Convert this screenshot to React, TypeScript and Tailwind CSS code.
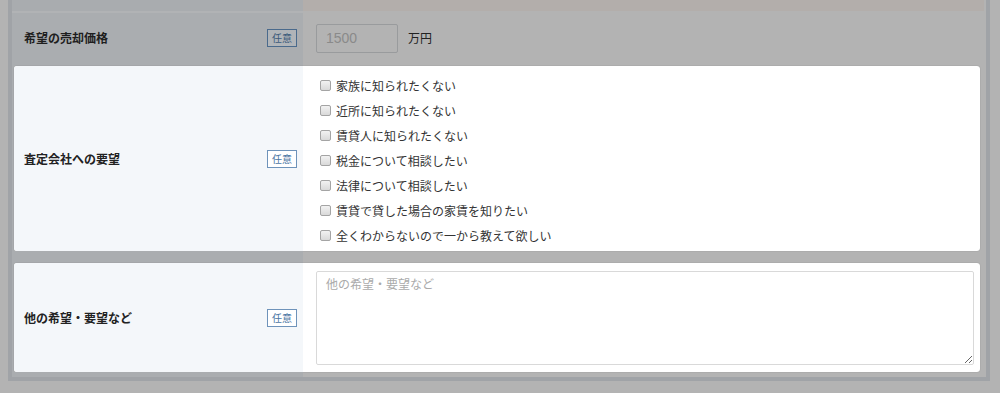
import React from "react";

const options = [
  "家族に知られたくない",
  "近所に知られたくない",
  "賃貸人に知られたくない",
  "税金について相談したい",
  "法律について相談したい",
  "賃貸で貸した場合の家賃を知りたい",
  "全くわからないので一から教えて欲しい",
];

function Badge({ dim }: { dim?: boolean }) {
  return dim ? (
    <span className="inline-flex items-center justify-center w-[30px] h-[18px] border border-[#4a6a8c] bg-[#b0b4b8] text-[#3b5a7a] text-[10px] leading-none">
      任意
    </span>
  ) : (
    <span className="inline-flex items-center justify-center w-[30px] h-[18px] border border-[#6e93ba] bg-white text-[#4b76a3] text-[10px] leading-none">
      任意
    </span>
  );
}

export default function App() {
  return (
    <div className="w-[1000px] h-[393px] bg-[#b3b3b3] overflow-hidden font-['Noto_Sans_CJK_JP',sans-serif]">
      <div className="ml-[8px] w-[982px] border-l-4 border-r-4 border-b-4 border-[#a0a3a7] bg-[#b3b3b3]">
        {/* partially visible top row */}
        <div className="flex h-[11px]">
          <div className="w-[291px] bg-[#a9acaf]" />
          <div className="flex-1 mr-[2px] bg-[#b3aeab]" />
        </div>
        <div className="flex h-[2px]">
          <div className="w-[291px] bg-[#b1b3b5]" />
          <div className="flex-1" />
        </div>
        {/* dimmed row: 希望の売却価格 */}
        <div className="flex h-[50px]">
          <div className="w-[291px] bg-[#aaadb0] flex items-center justify-between pl-[12px] pr-[6px]">
            <span className="text-[12px] font-bold text-[#1e1e1e] leading-none">希望の売却価格</span>
            <Badge dim />
          </div>
          <div className="flex-1 flex items-center pl-[13px]">
            <div className="w-[82px] h-[29px] border border-[#999b9d] rounded-[2px] flex items-center pl-[9px] text-[14px] text-[#8a8a8a] font-['Liberation_Sans',sans-serif]">
              1500
            </div>
            <span className="ml-[10px] text-[12px] text-[#222] leading-none">万円</span>
          </div>
        </div>
        <div className="flex h-[3px]">
          <div className="w-[291px] bg-[#aaadb0]" />
          <div className="flex-1" />
        </div>
        {/* highlighted row: 査定会社への要望 */}
        <div className="flex">
          <div className="w-[2px] bg-[#aaadb0]" />
          <div className="w-[966px] h-[185px] flex bg-white rounded-[3px] overflow-hidden shadow-[0_0_1px_rgba(0,0,0,0.35)]">
            <div className="w-[289px] bg-[#f4f7fa] flex items-center justify-between pl-[10px] pr-[6px]">
              <span className="text-[12px] font-bold text-[#222] leading-none">査定会社への要望</span>
              <Badge />
            </div>
            <div className="flex-1 flex flex-col pt-[7px] pl-[17px]">
              {options.map((o) => (
                <label key={o} className="h-[25px] flex items-center gap-[5px]">
                  <span className="w-[11px] h-[11px] border border-[#a4a4a4] rounded-[2px] bg-gradient-to-b from-[#f2f2f2] to-[#d9d9d9]" />
                  <span className="text-[12px] text-[#333] leading-none">{o}</span>
                </label>
              ))}
            </div>
          </div>
        </div>
        <div className="flex h-[12px]">
          <div className="w-[291px] bg-[#aaadb0]" />
          <div className="flex-1" />
        </div>
        {/* highlighted row: 他の希望・要望など */}
        <div className="flex">
          <div className="w-[2px] bg-[#aaadb0]" />
          <div className="w-[966px] h-[109px] flex bg-white rounded-[3px] overflow-hidden shadow-[0_0_1px_rgba(0,0,0,0.35)]">
            <div className="w-[289px] bg-[#f4f7fa] flex items-center justify-between pl-[10px] pr-[6px]">
              <span className="text-[12px] font-bold text-[#222] leading-none">他の希望・要望など</span>
              <Badge />
            </div>
            <div className="flex-1 pt-[8px] pl-[13px] pr-[6px]">
              <textarea
                placeholder="他の希望・要望など"
                className="block w-full h-[94px] border border-[#d9d9d9] rounded-[2px] px-[9px] py-[3px] text-[12px] leading-[18px] text-[#333] placeholder:text-[#aaaaaa] outline-none"
              />
            </div>
          </div>
        </div>
        <div className="flex h-[5px]">
          <div className="w-[291px] bg-[#aaadb0]" />
          <div className="flex-1" />
        </div>
      </div>
    </div>
  );
}
